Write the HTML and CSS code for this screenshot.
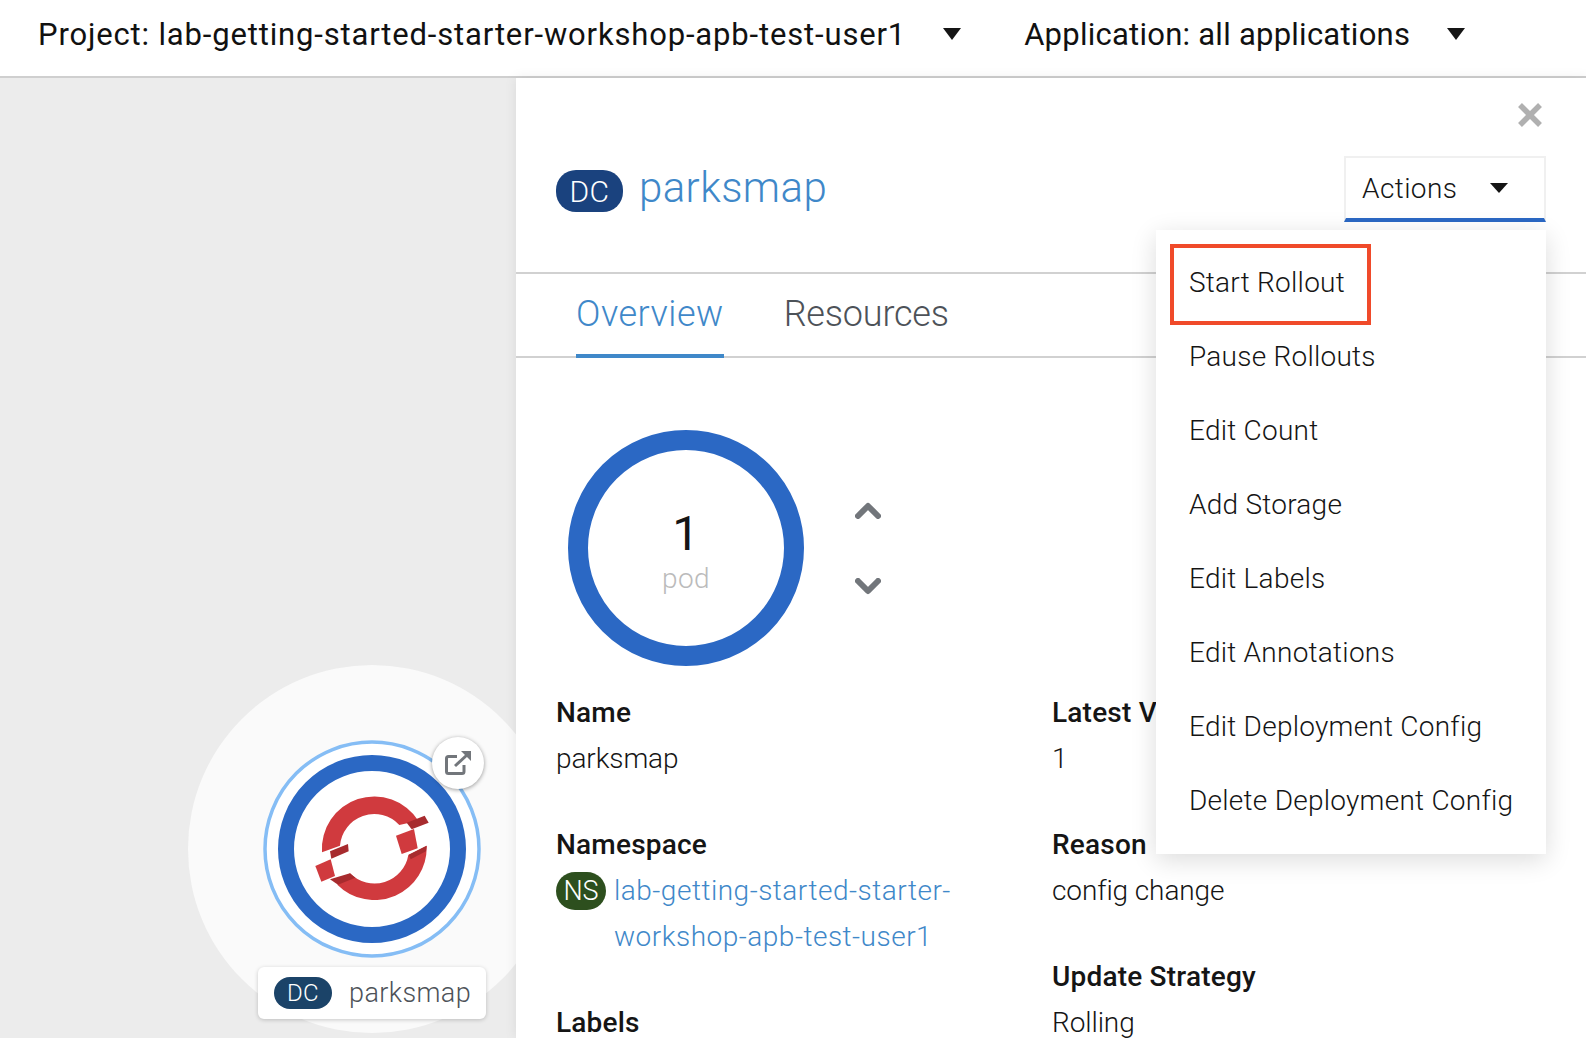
FILE: index.html
```html
<!DOCTYPE html>
<html lang="en">
<head>
    <meta charset="UTF-8">
    <link rel="stylesheet" href="styles.css">
    <title>parksmap</title>
</head>
<body>
    <header class="context-bar">
        <span class="context-name">Project: lab-getting-started-starter-workshop-apb-test-user1</span>
        <span class="caret caret-lg"></span>
        <span class="context-name context-app">Application: all applications</span>
        <span class="caret caret-lg"></span>
    </header>

    <main class="workspace">
        <section class="topology">
            <div class="node-halo"></div>
            <svg class="node-rings" viewBox="0 0 220 220" width="220" height="220">
                <circle cx="110" cy="110" r="107" fill="#fff" stroke="#85bdf5" stroke-width="3.5"/>
                <circle cx="110" cy="110" r="86" fill="#fff" stroke="#2b68c4" stroke-width="16"/>
            </svg>
            <svg class="node-logo" viewBox="0 0 450 360" width="150" height="120">
                <path fill="#d03a3e" d="M66 217A157 157 0 0 1 355 122L298 135A103 103 0 0 0 120 197Z"/>
                <path fill="#d03a3e" d="M380 197A157 157 0 0 1 112 314L150 280A103 103 0 0 0 325 225Z"/>
                <path fill="#d03a3e" d="M288 167L342 147L353 205L305 222Z"/>
                <path fill="#d03a3e" d="M46 258L92 238L105 288L64 305Z"/>
                <path fill="#a72b2e" d="M90 214L144 192L146 214L94 236Z"/>
                <path fill="#a72b2e" d="M320 128L374 107L386 128L335 148Z"/>
                <path fill="#a72b2e" d="M326 224L380 197L378 214L332 238Z"/>
                <path fill="#a72b2e" d="M90 298L150 280L166 293L114 314Z"/>
            </svg>
            <button class="node-link">
                <svg viewBox="0 0 26 24" width="26" height="24">
                    <path fill="none" stroke="#72767b" stroke-width="3" d="M12 5.5H3.500a2 2 0 0 0-2 2V20.500a2 2 0 0 0 2 2H17a2 2 0 0 0 2-2V14"/>
                    <path fill="none" stroke="#72767b" stroke-width="3" d="M10 15L22 4"/>
                    <path fill="#72767b" d="M16 0H26V10Z"/>
                </svg>
            </button>
            <div class="node-label">
                <span class="badge badge-node">DC</span>
                <span>parksmap</span>
            </div>
        </section>

        <section class="panel">
            <svg class="panel-close" viewBox="0 0 24 24" width="24" height="24">
                <path fill="none" stroke="#b0b0b0" stroke-width="5.500" d="M2 2L22 22M22 2L2 22"/>
            </svg>

            <div class="panel-head">
                <span class="badge badge-title">DC</span>
                <a class="panel-title">parksmap</a>
                <button class="actions-btn">Actions <span class="caret"></span></button>
            </div>

            <nav class="tabs">
                <a class="tab tab-active">Overview</a>
                <a class="tab">Resources</a>
            </nav>

            <div class="pods">
                <div class="pod-ring">
                    <span class="pod-count">1</span>
                    <span class="pod-unit">pod</span>
                </div>
                <div class="pod-scale">
                    <svg viewBox="0 0 26 17" width="26" height="17"><path fill="none" stroke="#72767b" stroke-width="6" stroke-linecap="round" stroke-linejoin="round" d="M3 14L13 4L23 14"/></svg>
                    <svg viewBox="0 0 26 17" width="26" height="17"><path fill="none" stroke="#72767b" stroke-width="6" stroke-linecap="round" stroke-linejoin="round" d="M3 3L13 13L23 3"/></svg>
                </div>
            </div>

            <div class="details">
                <dl class="details-col">
                    <dt>Name</dt>
                    <dd>parksmap</dd>
                    <dt>Namespace</dt>
                    <dd class="ns-row">
                        <span class="badge badge-ns">NS</span>
                        <a class="link">lab-getting-started-starter-workshop-apb-test-user1</a>
                    </dd>
                    <dt>Labels</dt>
                </dl>
                <dl class="details-col">
                    <dt>Latest Version</dt>
                    <dd>1</dd>
                    <dt>Reason</dt>
                    <dd>config change</dd>
                    <dt>Update Strategy</dt>
                    <dd>Rolling</dd>
                </dl>
            </div>

            <ul class="actions-menu">
                <li class="menu-marked">Start Rollout</li>
                <li>Pause Rollouts</li>
                <li>Edit Count</li>
                <li>Add Storage</li>
                <li>Edit Labels</li>
                <li>Edit Annotations</li>
                <li>Edit Deployment Config</li>
                <li>Delete Deployment Config</li>
            </ul>
        </section>
    </main>
</body>
</html>
```

FILE: styles.css
```css
*, *::after {
    box-sizing: border-box;
}

html, body {
    margin: 0;
    height: 100%;
    overflow: hidden;
}

body {
    display: flex;
    flex-direction: column;
    font-family: 'Roboto', 'Liberation Sans', sans-serif;
    font-size: 28px;
    font-weight: 300;
    letter-spacing: 0.4px;
    color: #24282d;
    background-color: #fff;
}

.context-bar {
    display: flex;
    align-items: center;
    flex: none;
    height: 78px;
    padding: 0 0 8px 38px;
    border-bottom: 2px solid #cfcfcf;
    font-size: 31px;
    font-weight: 400;
    letter-spacing: 0.84px;
    color: #111;
}

.context-app {
    margin-left: 63px;
    letter-spacing: 0.25px;
}

.caret {
    display: inline-block;
    width: 0;
    height: 0;
    border-left: 9px solid transparent;
    border-right: 9px solid transparent;
    border-top: 10px solid #151515;
}

.caret-lg {
    margin-left: 37px;
    border-top-width: 12px;
}

.workspace {
    display: flex;
    flex: 1;
    min-height: 0;
}

.topology {
    position: relative;
    flex: none;
    width: 516px;
    background-color: #ececec;
}

.node-halo {
    position: absolute;
    left: 188px;
    top: 587px;
    width: 368px;
    height: 368px;
    border-radius: 50%;
    background-color: #fafafa;
}

.node-rings {
    position: absolute;
    left: 262px;
    top: 661px;
}

.node-logo {
    position: absolute;
    left: 300px;
    top: 702px;
}

.node-link {
    position: absolute;
    left: 432px;
    top: 659px;
    width: 52px;
    height: 52px;
    padding: 0;
    border: none;
    border-radius: 50%;
    background-color: #fff;
    box-shadow: 0 1px 4px rgba(0, 0, 0, 0.4);
    display: flex;
    align-items: center;
    justify-content: center;
}

.node-label {
    position: absolute;
    left: 258px;
    top: 889px;
    display: flex;
    align-items: center;
    gap: 17px;
    width: 228px;
    height: 52px;
    padding-left: 16px;
    border-radius: 6px;
    background-color: #fff;
    box-shadow: 0 1px 4px rgba(0, 0, 0, 0.2);
    font-size: 27px;
    color: #4d5258;
}

.badge {
    display: inline-flex;
    align-items: center;
    justify-content: center;
    flex: none;
    border-radius: 20px;
    color: #fff;
}

.badge-node {
    width: 58px;
    height: 32px;
    font-size: 24px;
    background-color: #1b4368;
}

.badge-title {
    width: 67px;
    height: 42px;
    margin-top: 4px;
    font-size: 30px;
    background-color: #1a427e;
}

.badge-ns {
    width: 50px;
    height: 38px;
    margin-top: 4px;
    font-size: 27px;
    background-color: #2d4f1e;
}

.panel {
    position: relative;
    flex: 1;
    min-width: 0;
    background-color: #fff;
    box-shadow: 0 0 12px rgba(0, 0, 0, 0.08);
}

.panel-close {
    position: absolute;
    right: 44px;
    top: 25px;
}

.panel-head {
    display: flex;
    align-items: center;
    height: 196px;
    padding: 78px 40px 50px;
    border-bottom: 2px solid #d1d1d1;
}

.panel-title {
    margin: 0 0 4px 16px;
    font-size: 42px;
    color: #3f88c9;
}

.actions-btn {
    display: flex;
    align-items: center;
    justify-content: space-between;
    width: 202px;
    height: 66px;
    margin-left: auto;
    padding: 0 36px 0 16px;
    border: 2px solid #f0f0f0;
    border-bottom: 4px solid #2b68c4;
    background-color: #fff;
    font: inherit;
    letter-spacing: inherit;
    color: #151515;
}

.tabs {
    display: flex;
    gap: 60px;
    height: 84px;
    padding-left: 60px;
    border-bottom: 2px solid #d1d1d1;
    font-size: 36px;
    letter-spacing: -0.2px;
    color: #4d5258;
}

.tab {
    height: 84px;
    padding-top: 19px;
}

.tab-active {
    border-bottom: 4px solid #3f88c9;
    letter-spacing: 0.5px;
    color: #3f88c9;
}

.pods {
    display: flex;
    align-items: center;
    gap: 51px;
    padding: 72px 0 0 52px;
}

.pod-ring {
    display: flex;
    flex-direction: column;
    align-items: center;
    justify-content: center;
    width: 236px;
    height: 236px;
    padding-top: 7px;
    border: 20px solid #2b68c4;
    border-radius: 50%;
}

.pod-count {
    font-size: 48px;
    font-weight: 400;
    line-height: 56px;
    color: #151515;
}

.pod-unit {
    margin-top: -2px;
    font-size: 28px;
    line-height: 38px;
    color: #bbb;
}

.pod-scale {
    display: flex;
    flex-direction: column;
    gap: 59px;
}

.details {
    display: flex;
    padding: 24px 0 0 40px;
}

.details-col {
    flex: none;
    width: 496px;
    margin: 0;
    line-height: 46px;
}

.details-col dt {
    font-weight: 500;
    letter-spacing: 0.2px;
    color: #151515;
}

.details-col dd {
    margin: 0 0 40px;
    letter-spacing: -0.1px;
    color: #151515;
}

.ns-row {
    display: flex;
    gap: 8px;
    width: 420px;
}

.link {
    letter-spacing: 0.5px;
    color: #3f88c9;
}

.actions-menu {
    position: absolute;
    left: 640px;
    top: 152px;
    width: 390px;
    height: 624px;
    margin: 0;
    padding: 16px 0 0;
    list-style: none;
    background-color: #fff;
    box-shadow: 0 6px 24px rgba(0, 0, 0, 0.14);
    letter-spacing: 0.25px;
    color: #151515;
}

.actions-menu li {
    position: relative;
    height: 74px;
    padding-left: 33px;
    line-height: 74px;
}

.menu-marked::after {
    content: "";
    position: absolute;
    left: 14px;
    top: -2px;
    width: 201px;
    height: 81px;
    border: 4px solid #f04a2a;
}
```
